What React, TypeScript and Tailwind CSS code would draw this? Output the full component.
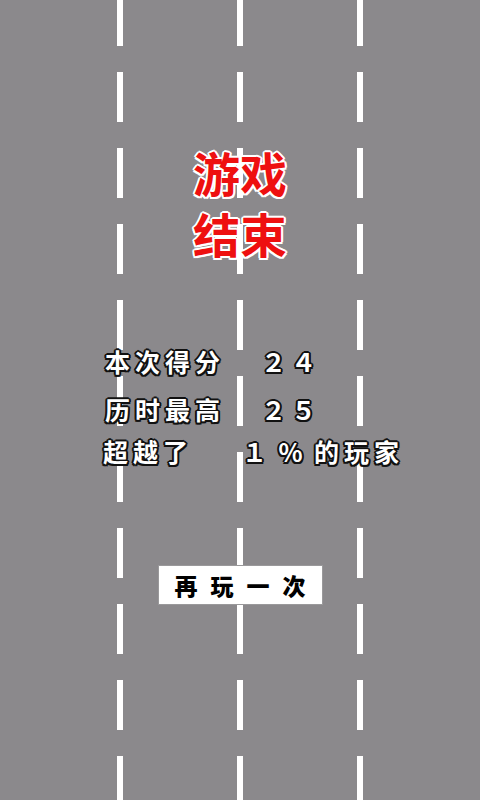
import React from "react"

const cjk = "font-['Noto_Sans_CJK_SC','Noto_Sans',sans-serif]"

// black outline round white text
const outlined =
  "text-white [text-shadow:2px_0_0_#111,-2px_0_0_#111,0_2px_0_#111,0_-2px_0_#111,1.5px_1.5px_0_#111,-1.5px_-1.5px_0_#111,1.5px_-1.5px_0_#111,-1.5px_1.5px_0_#111]"

// white outline round the red title
const titleOutline =
  "text-[#ee1010] [text-shadow:2px_0_0_#fff,-2px_0_0_#fff,0_2px_0_#fff,0_-2px_0_#fff,1.5px_1.5px_0_#fff,-1.5px_-1.5px_0_#fff,1.5px_-1.5px_0_#fff,-1.5px_1.5px_0_#fff]"

const statText = `text-[25px] tracking-[5px] font-bold whitespace-nowrap ${cjk} ${outlined}`

function LaneLine() {
  return (
    <div className="w-[6px] h-full bg-[repeating-linear-gradient(to_bottom,#ffffff_0_50px,transparent_50px_76px)] [background-position:0_-4px]" />
  )
}

function StatRow({ label, value, className }: { label: string; value: string; className: string }) {
  return (
    <div className={`flex h-[40px] items-center ${className}`}>
      <span className={`w-[156px] ${statText}`}>{label}</span>
      <span className={`tracking-[4px] ${statText}`}>{value}</span>
    </div>
  )
}

export default function App() {
  return (
    <div className="relative w-[480px] h-[800px] overflow-hidden bg-[#8b898c]">
      {/* road with three dashed lane markings */}
      <div className="flex h-full">
        <div className="w-[117px]" />
        <LaneLine />
        <div className="w-[114px]" />
        <LaneLine />
        <div className="w-[114px]" />
        <LaneLine />
        <div className="flex-1" />
      </div>

      <div className="absolute inset-0 flex flex-col">
        <div className={`pt-[141px] text-center text-[47px] leading-[61px] font-bold ${cjk} ${titleOutline}`}>
          <div>游戏</div>
          <div>结束</div>
        </div>

        <div className="pl-[105px]">
          <StatRow label="本次得分" value="２４" className="mt-[79px]" />
          <StatRow label="历时最高" value="２５" className="mt-[8px]" />
          <div className="flex h-[40px] items-center mt-[2px] -ml-[2px]">
            <span className={`w-[139px] ${statText}`}>超越了</span>
            <span className={statText}>１</span>
            <span className={`ml-[6px] ${statText}`}>％</span>
            <span className={`ml-[6px] ${statText}`}>的玩家</span>
          </div>
        </div>

        <div className="mt-[93px] flex justify-center">
          <button
            className={`w-[165px] h-[40px] bg-white border border-[#9a999b] text-black text-[23px] font-black tracking-[13px] pl-[13px] ${cjk}`}
          >
            再玩一次
          </button>
        </div>
      </div>
    </div>
  )
}
